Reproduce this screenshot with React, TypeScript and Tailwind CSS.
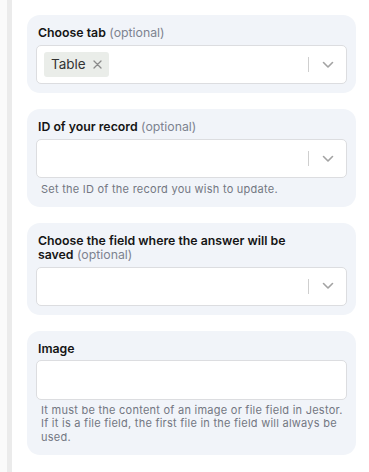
import React from "react";

const font = { fontFamily: "Inter, 'Noto Sans', sans-serif" };

function Chevron() {
  return (
    <svg width="12" height="8" viewBox="0 0 12 8" className="block">
      <path d="M1.5 1.5 L6 6 L10.5 1.5" fill="none" stroke="#a3a3a3" strokeWidth="1.6" strokeLinecap="round" strokeLinejoin="round" />
    </svg>
  );
}

function SelectBox({ children }: { children?: React.ReactNode }) {
  return (
    <div className="flex h-[39px] items-center rounded-[5px] border border-[#dcdde0] bg-white">
      <div className="flex flex-1 items-center pl-[7px]">{children}</div>
      <div className="h-[15px] w-px bg-[#cfcfcf]" />
      <div className="flex w-[37px] items-center justify-center">
        <Chevron />
      </div>
    </div>
  );
}

function Label({ title, optional }: { title: string; optional?: boolean }) {
  return (
    <div className="pl-[2px] pr-[40px] text-[12.3px] leading-[14px] text-[#151515]">
      <span className="font-semibold">{title}</span>
      {optional && <span className="font-normal text-[#7d8390]"> (optional)</span>}
    </div>
  );
}

function Help({ children }: { children: React.ReactNode }) {
  return (
    <div className="pl-[5px] pr-[1px] text-[11px] leading-[13.5px] tracking-[0.25px] text-[#737782]">{children}</div>
  );
}

export default function App() {
  return (
    <div className="flex min-h-[472px] w-[369px] bg-white" style={font}>
      <div className="w-[7px] bg-[#fafafa]" />
      <div className="w-[5px] bg-[#ebebeb]" />
      <div className="flex w-[329px] flex-col gap-[16px] pl-[15px] pt-[15px] box-content">
        <div className="flex flex-col gap-[5px] rounded-[13px] bg-[#f1f4f9] px-[9px] pt-[11px] pb-[9px]">
          <Label title="Choose tab" optional />
          <SelectBox>
            <div className="flex h-[25px] items-center gap-[7px] rounded-[3px] bg-[#eaede9] pl-[7px] pr-[7px] text-[13.5px] text-[#333]">
              <span>Table</span>
              <svg width="9" height="9" viewBox="0 0 9 9">
                <path d="M1 1 L8 8 M8 1 L1 8" stroke="#8a8a8a" strokeWidth="1.3" strokeLinecap="round" />
              </svg>
            </div>
          </SelectBox>
        </div>

        <div className="flex flex-col gap-[5px] rounded-[13px] bg-[#f1f4f9] px-[9px] pt-[11px] pb-[10px]">
          <Label title="ID of your record" optional />
          <SelectBox />
          <Help>Set the ID of the record you wish to update.</Help>
        </div>

        <div className="flex flex-col gap-[5px] rounded-[13px] bg-[#f1f4f9] px-[9px] pt-[11px] pb-[9px]">
          <Label title="Choose the field where the answer will be saved" optional />
          <SelectBox />
        </div>

        <div className="flex flex-col gap-[4px] rounded-[13px] bg-[#f1f4f9] px-[9px] pt-[11px] pb-[11px]">
          <Label title="Image" />
          <div className="h-[40px] rounded-[5px] border border-[#dcdde0] bg-white" />
          <Help>
            It must be the content of an image or file field in Jestor. If it is a file field, the first file in the field will always be used.
          </Help>
        </div>
      </div>
    </div>
  );
}
